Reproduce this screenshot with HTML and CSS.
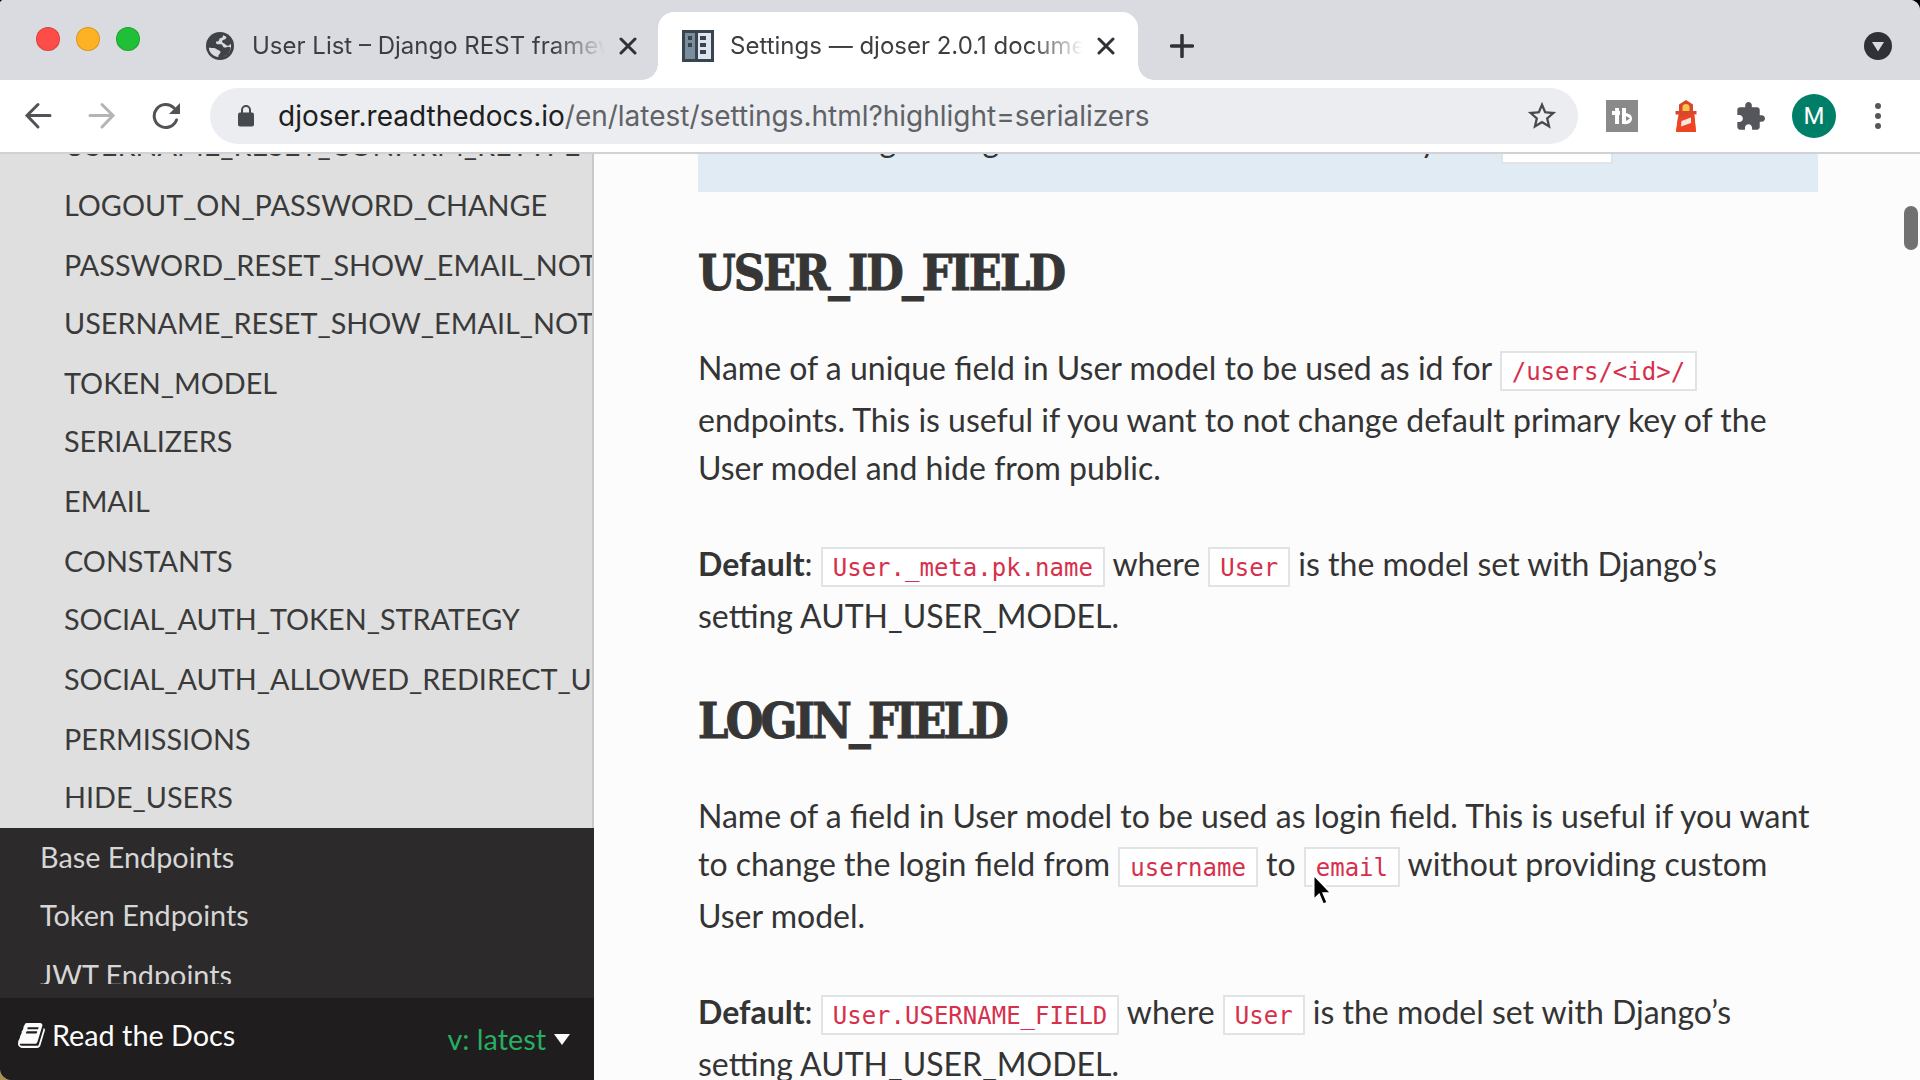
FILE: index.html
```html
<!DOCTYPE html>
<html lang="en">
<head>
<meta charset="utf-8">
<title>Settings — djoser 2.0.1 documentation</title>
<link rel="stylesheet" href="styles.css">
</head>
<body>
<div class="window">
  <header class="tabstrip">
    <div class="lights"><i class="light red"></i><i class="light amber"></i><i class="light green"></i></div>
    <div class="tab">
      <svg class="globe" viewBox="0 0 28 28"><circle cx="14" cy="14" r="14" fill="#3f4247"/><path d="M3 15.500C6 16.500 9 15.500 10.500 17C11.500 18.500 14 18 14.500 20C14.500 22 12 22 12.500 25C7 24.500 2.500 20 3 15.500ZM17 3.200C17 5 16 6 13.500 6.500C13 9 12.500 9.500 10 9.500C9.500 12 11 12.500 14.500 12.200C17.500 12.200 16 15 18.500 15.500C20.500 15.800 22 13.500 24.500 15.500C24 20 21 23.500 17 24.800C23 22.500 26 17 24.800 11.500C23.500 14 21 14.500 19.500 12.500C18 11 16 11 16 9C17 7.500 20 8 20.500 5C19.500 4 18.200 3.500 17 3.200Z" fill="#dadbe0"/></svg>
      <span class="tab-title">User List – Django REST framework</span>
      <svg class="close" viewBox="0 0 18 18"><path d="M2 2L16 16M16 2L2 16"/></svg>
    </div>
    <div class="tab active">
      <svg class="favicon" viewBox="0 0 32 32"><path fill="#36454f" d="M0 0h32v32H0z"/><path fill="#7b8d9c" d="M3 3h10v26H3z"/><path fill="#dfe4ee" d="M16 3h13v26H16z"/><path fill="#36454f" d="M6 6h4v4H6zM6 13h4v4H6zM18 6h6v4h-6zM18 13h6v4h-6zM18 20h6v4h-6z"/></svg>
      <span class="tab-title">Settings — djoser 2.0.1 documentation</span>
      <svg class="close" viewBox="0 0 18 18"><path d="M2 2L16 16M16 2L2 16"/></svg>
    </div>
    <svg class="plus" viewBox="0 0 24 24"><path d="M12 1.500V22.500M1.500 12H22.500"/></svg>
    <svg class="tabsearch" viewBox="0 0 28 28"><circle cx="14" cy="14" r="14" fill="#2f3136"/><path d="M8 10H20L14 19.500Z" fill="#dadbe0"/></svg>
  </header>

  <div class="toolbar">
    <svg class="nav" viewBox="0 0 28 28"><path d="M26 13.500H3M14 2.500L3 13.500L14 25"/></svg>
    <svg class="nav dim" viewBox="0 0 28 28"><path d="M2 13.500H25M14 2.500L25 13.500L14 25"/></svg>
    <svg class="nav" viewBox="0 0 28 28"><path d="M24.500 18A11.500 11.500 0 1 1 22 6"/><path class="solid" d="M28 1V12H17Z"/></svg>
    <div class="omnibox">
      <svg class="lock" viewBox="0 0 16 22"><rect y="7.500" width="16" height="14" rx="2" fill="#46494e"/><path d="M4 8V5a4 4 0 0 1 8 0V8" fill="none" stroke="#46494e" stroke-width="2"/></svg>
      <span class="url"><b>djoser.readthedocs.io</b>/en/latest/settings.html?highlight=serializers</span>
      <svg class="star" viewBox="0 0 24 24"><path fill="#46494e" d="M22 9.240l-7.190-.62L12 2 9.190 8.630 2 9.240l5.460 4.730L5.820 21 12 17.270 18.180 21l-1.630-7.030L22 9.240zM12 15.400l-3.760 2.270 1-4.280-3.320-2.880 4.380-.38L12 6.100l1.710 4.040 4.380.38-3.320 2.880 1 4.280L12 15.400z"/></svg>
    </div>
    <svg class="tb" viewBox="0 0 32 32"><path fill="#8a8a8a" d="M0 0h32v32H0z"/><path fill="none" stroke="#fff" stroke-width="4" d="M6 13H14M11 8V24M18 8V24"/><path fill="#fff" d="M16 14C22 12 26 15 26 18.500C26 23 21 25.500 16 23.500Z"/><path fill="#8a8a8a" d="M20 16L24 18.500L20 21Z"/></svg>
    <svg class="lighthouse" viewBox="0 0 22 32"><path fill="#d9482b" d="M11 0L18 4.500V11H21.500V14.500H19L21 32H1L3.500 14.500H0.500V11H4V4.500Z"/><path fill="#f04323" d="M3 17L19.500 15L21 32H1Z"/><path fill="#f7c64f" d="M7.500 11V7.500a3.500 3.500 0 0 1 7 0V11z"/><path fill="#f2e6e6" d="M6.500 21L16 17.500V23L6 26.500Z"/></svg>
    <svg class="puzzle" viewBox="1 1 22 22"><path fill="#54565b" d="M20.500 11H19V7c0-1.100-.9-2-2-2h-4V3.500C13 2.120 11.880 1 10.500 1S8 2.120 8 3.500V5H4c-1.100 0-1.990.9-1.990 2v3.800H3.500c1.490 0 2.700 1.210 2.700 2.700s-1.210 2.700-2.700 2.700H2V20c0 1.100.9 2 2 2h3.800v-1.500c0-1.490 1.210-2.700 2.700-2.700 1.490 0 2.700 1.210 2.700 2.700V22H17c1.100 0 2-.9 2-2v-4h1.500c1.380 0 2.500-1.120 2.500-2.500S21.880 11 20.500 11z"/></svg>
    <div class="avatar">M</div>
    <svg class="dots" viewBox="0 0 6 26"><circle cx="3" cy="3" r="3"/><circle cx="3" cy="13" r="3"/><circle cx="3" cy="23" r="3"/></svg>
  </div>

  <div class="page">
    <aside class="sidebar">
      <nav class="menu">
        <ul class="sub">
          <li>USERNAME_RESET_CONFIRM_RETYPE</li>
          <li>LOGOUT_ON_PASSWORD_CHANGE</li>
          <li class="short">PASSWORD_RESET_SHOW_EMAIL_NOT_FOUND</li>
          <li>USERNAME_RESET_SHOW_EMAIL_NOT_FOUND</li>
          <li class="short">TOKEN_MODEL</li>
          <li>SERIALIZERS</li>
          <li>EMAIL</li>
          <li class="short">CONSTANTS</li>
          <li>SOCIAL_AUTH_TOKEN_STRATEGY</li>
          <li>SOCIAL_AUTH_ALLOWED_REDIRECT_URIS</li>
          <li class="short">PERMISSIONS</li>
          <li>HIDE_USERS</li>
        </ul>
        <ul class="top">
          <li class="short">Base Endpoints</li>
          <li>Token Endpoints</li>
          <li>JWT Endpoints</li>
        </ul>
      </nav>
      <div class="versions">
        <svg class="book" viewBox="0 0 1792 1792"><path fill="#fcfcfc" d="M1639 478q40 57 18 129l-275 906q-19 64-76.500 107.500t-122.500 43.500h-923q-77 0-148.500-53.500t-99.500-131.500q-24-67-2-127 0-4 3-27t4-37q1-8-3-21.500t-3-19.500q2-11 8-21t16.500-23.500 16.500-23.500q23-38 45-91.500t30-91.500q3-10 .5-30t-.5-28q3-11 17-28t17-23q21-36 42-92t25-90q1-9-2.500-32t.5-28q4-13 22-30.500t22-22.500q19-26 42.500-84.500t27.500-96.500q1-8-3-25.500t-2-26.500q2-8 9-18t18-23 17-21q8-12 16.500-30.500t15-35 16-36 19.500-32 26.500-23.500 36-11.500 47.500 5.500l-1 3q38-9 51-9h761q74 0 114 56t18 130l-274 906q-36 119-71.500 153.500t-128.500 34.500h-869q-27 0-38 15-11 16-1 43 24 70 144 70h923q29 0 56-15.500t35-41.500l300-987q7-22 5-57 38 15 59 43zm-1064 2q-4 13 2 22.500t20 9.500h608q13 0 25.500-9.500t16.500-22.500l21-64q4-13-2-22.500t-20-9.500h-608q-13 0-25.500 9.500t-16.500 22.500zm-83 256q-4 13 2 22.500t20 9.500h608q13 0 25.500-9.500t16.500-22.500l21-64q4-13-2-22.500t-20-9.500h-608q-13 0-25.500 9.500t-16.500 22.500z"/></svg>
        <span class="rtd">Read the Docs</span>
        <span class="latest">v: latest</span>
        <i class="caret"></i>
      </div>
    </aside>

    <main class="content">
      <div class="note"><div class="line">All following setting names written in CAPS are keys on <code>DJOSER</code> dict.</div></div>
      <h2>USER_ID_FIELD</h2>
      <p>
        <span class="line tall">Name of a unique field in User model to be used as id for <code>/users/&lt;id&gt;/</code></span>
        <span class="line">endpoints. This is useful if you want to not change default primary key of the</span>
        <span class="line">User model and hide from public.</span>
      </p>
      <p>
        <span class="line tall"><strong>Default</strong>: <code>User._meta.pk.name</code> where <code>User</code> is the model set with Django’s</span>
        <span class="line">setting AUTH_USER_MODEL.</span>
      </p>
      <h2 class="tight">LOGIN_FIELD</h2>
      <p>
        <span class="line">Name of a field in User model to be used as login field. This is useful if you want</span>
        <span class="line tall">to change the login field from <code>username</code> to <code>email</code> without providing custom</span>
        <span class="line">User model.</span>
      </p>
      <p>
        <span class="line tall"><strong>Default</strong>: <code>User.USERNAME_FIELD</code> where <code>User</code> is the model set with Django’s</span>
        <span class="line">setting AUTH_USER_MODEL.</span>
      </p>
    </main>
    <div class="scroll-thumb"></div>
  </div>
  <svg class="cursor" viewBox="0 0 22 34"><path d="M1.500 1.500V27L7 21.800L11 31.500L15.500 29.600L11.500 20.200H19.500Z" fill="#000" stroke="#fff" stroke-width="2"/></svg>
</div>
</body>
</html>
```
FILE: styles.css
```css
* { box-sizing: border-box; }
body { margin: 0; background: linear-gradient(#000 50%, #a8934a 50%); }
svg { display: block; flex: none; }
.window {
  position: relative;
  width: 1920px;
  height: 1080px;
  overflow: hidden;
  display: flex;
  flex-direction: column;
  background: #fcfcfc;
  border-radius: 4px 10px 0 12px;
  font-family: Lato, "Liberation Sans", sans-serif;
  color: #343434;
}

/* tab strip */
.tabstrip {
  display: flex;
  align-items: center;
  height: 80px;
  padding: 12px 28px 0 36px;
  background: #dadbe0;
  font-family: Inter, "Liberation Sans", sans-serif;
}
.lights { display: flex; gap: 16px; width: 142px; margin-top: -14px; }
.light { width: 24px; height: 24px; border-radius: 50%; border: 1px solid rgba(0, 0, 0, .15); }
.red { background: #fe4d49; }
.amber { background: #fdb125; }
.green { background: #1fbf38; }
.tab { display: flex; align-items: center; width: 480px; height: 68px; padding: 0 21px 0 28px; }
.tab.active {
  position: relative;
  background: #fff;
  border-radius: 16px 16px 0 0;
  padding: 0 23px 0 24px;
}
.tab.active::before, .tab.active::after {
  content: "";
  position: absolute;
  bottom: 0;
  width: 16px;
  height: 16px;
}
.tab.active::before { left: -16px; background: radial-gradient(circle at 0 0, #dadbe0 15.500px, #fff 16px); }
.tab.active::after { right: -16px; background: radial-gradient(circle at 100% 0, #dadbe0 15.500px, #fff 16px); }
.globe { width: 28px; height: 28px; }
.favicon { width: 32px; height: 32px; }
.tab-title {
  flex: 1;
  margin: 0 14px 1px 18px;
  overflow: hidden;
  white-space: nowrap;
  font-size: 24px;
  color: #3c3e42;
  -webkit-mask-image: linear-gradient(to right, #000 calc(100% - 52px), transparent);
  mask-image: linear-gradient(to right, #000 calc(100% - 52px), transparent);
}
.active .tab-title { margin-left: 16px; }
.close { width: 18px; height: 18px; fill: none; stroke: #2f3136; stroke-width: 3; stroke-linecap: round; }
.plus { width: 24px; height: 24px; margin-left: 32px; fill: none; stroke: #2f3136; stroke-width: 3.500; stroke-linecap: round; }
.tabsearch { width: 28px; height: 28px; margin-left: auto; }

/* toolbar */
.toolbar {
  display: flex;
  align-items: center;
  height: 74px;
  padding: 0 39px 0 24px;
  background: #fff;
  border-bottom: 2px solid #d0d2d5;
}
.nav { width: 28px; height: 28px; margin-right: 36px; fill: none; stroke: #515357; stroke-width: 3; stroke-linecap: round; }
.nav .solid { fill: #515357; stroke: none; }
.nav.dim { stroke: #b3b4b6; }
.omnibox {
  display: flex;
  align-items: center;
  width: 1368px;
  height: 56px;
  margin-left: -6px;
  padding: 0 19px 0 28px;
  border-radius: 28px;
  background: #ecedf1;
}
.lock { width: 16px; height: 22px; }
.url {
  flex: 1;
  margin-left: 24px;
  white-space: nowrap;
  font: 28px Inter, "Liberation Sans", sans-serif;
  letter-spacing: -.01px;
  color: #5f6266;
}
.url b { font-weight: 400; color: #1d1e20; }
.star { width: 34px; height: 34px; }
.tb { width: 32px; height: 32px; margin-left: 28px; }
.lighthouse { width: 22px; height: 32px; margin-left: 37px; }
.puzzle { width: 29px; height: 29px; margin-left: 39px; }
.avatar {
  width: 44px;
  height: 44px;
  margin-left: 27px;
  border-radius: 50%;
  background: #007f68;
  color: #fff;
  font: 24px/44px Roboto, "Liberation Sans", sans-serif;
  text-align: center;
}
.dots { width: 6px; height: 26px; margin-left: auto; fill: #55575b; }

/* page */
.page { position: relative; display: flex; flex: 1; min-height: 0; overflow: hidden; }
.sidebar { display: flex; flex-direction: column; width: 594px; background: #2c2a2b; }
.menu { height: 830px; overflow: hidden; }
.menu ul { margin: 0; padding: 0; list-style: none; }
.menu li {
  height: 60px;
  padding-left: 64px;
  overflow: hidden;
  white-space: nowrap;
  font-size: 28.800px;
  line-height: 58px;
}
.menu li.short { height: 58px; }
.sub { height: 674px; overflow: hidden; background: #dfdfdf; border-right: 2px solid #c9c9c9; color: #3a3a3a; }
.sub li:first-child { margin-top: -38px; }
.top li { padding-left: 40px; color: #d6d6d6; }
.versions {
  display: flex;
  align-items: center;
  height: 82px;
  margin-top: 14px;
  padding: 0 24px 8px 18px;
  background: #1f1d1d;
  font-size: 28.800px;
}
.book { width: 29px; height: 29px; }
.rtd { margin-left: 5px; color: #fcfcfc; }
.latest { margin-left: auto; padding-top: 7px; color: #27ae60; }
.caret { margin: 8px 0 0 8px; border: 8px solid transparent; border-top: 11px solid #fcfcfc; border-bottom: 0; }

.content { width: 1120px; margin-left: 104px; font-size: 32px; }
.note { height: 38px; padding: 0 24px; background: #e1ebf4; overflow: hidden; }
.note .line { margin-top: -38px; }
.note code { padding: 5px 11px 4px; margin-left: -2px; }
.line { display: block; height: 48px; line-height: 48px; white-space: nowrap; }
.line.tall { height: 52px; }
code {
  padding: 5px 10px 3px;
  border: 2px solid #e1e4e5;
  background: #fff;
  color: #d6304c;
  font: 24px/1 "DejaVu Sans Mono", monospace;
}
h2 {
  margin: 51px 0 0;
  font: bold 48px/60px "Roboto Slab", "DejaVu Serif Condensed", "DejaVu Serif", serif;
  font-stretch: condensed;
  letter-spacing: -1.850px;
  -webkit-text-stroke: 1px #363636;
  color: #363636;
}
h2.tight { letter-spacing: -2.700px; }
p { margin: 48px 0 0; }
h2 + p { margin-top: 41px; }
.scroll-thumb {
  position: absolute;
  top: 52px;
  right: 2px;
  width: 14px;
  height: 44px;
  border-radius: 7px;
  background: #717171;
}
.cursor { position: absolute; left: 1312px; top: 873px; width: 22px; height: 34px; }
```
